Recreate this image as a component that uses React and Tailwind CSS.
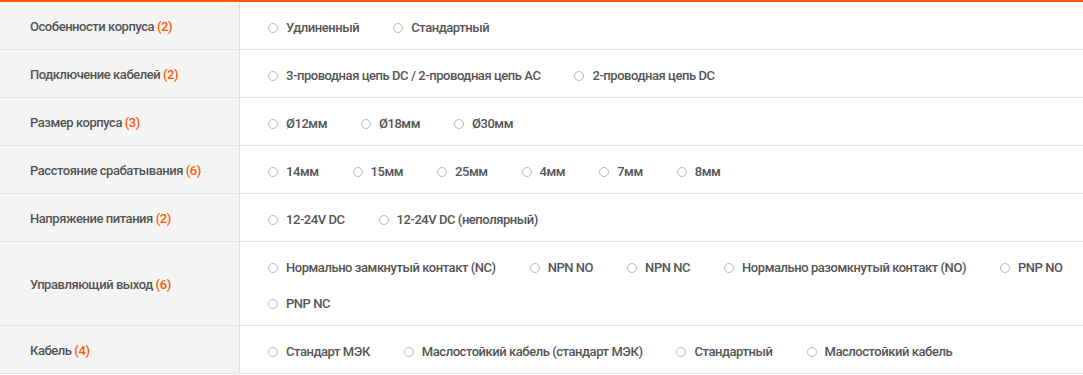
import React from "react";

const rows = [
  { label: "Особенности корпуса", count: 2, options: ["Удлиненный", "Стандартный"] },
  { label: "Подключение кабелей", count: 2, options: ["3-проводная цепь DC / 2-проводная цепь AC", "2-проводная цепь DC"] },
  { label: "Размер корпуса", count: 3, options: ["Ø12мм", "Ø18мм", "Ø30мм"] },
  { label: "Расстояние срабатывания", count: 6, options: ["14мм", "15мм", "25мм", "4мм", "7мм", "8мм"] },
  { label: "Напряжение питания", count: 2, options: ["12-24V DC", "12-24V DC (неполярный)"] },
  { label: "Управляющий выход", count: 6, options: ["Нормально замкнутый контакт (NC)", "NPN NO", "NPN NC", "Нормально разомкнутый контакт (NO)", "PNP NO", "PNP NC"] },
  { label: "Кабель", count: 4, options: ["Стандарт МЭК", "Маслостойкий кабель (стандарт МЭК)", "Стандартный", "Маслостойкий кабель"] },
];

export default function App() {
  return (
    <div className="w-[1083px] bg-white border-t-2 border-[#ff5a00] font-['Roboto',sans-serif] text-[13px] font-medium tracking-[-0.45px] text-[#555555]">
      {rows.map((r, i) => (
        <div key={i} className="flex border-b border-[#e2e2e2]">
          <div className="w-[240px] shrink-0 bg-[#f4f4f4] border-r border-[#dddddd] flex items-center pl-[30px] pt-[3px]">
            <span>
              {r.label} <span className="text-[#ff5a00]">({r.count})</span>
            </span>
          </div>
          <div className="flex-1 flex flex-wrap gap-x-[34px] gap-y-[16px] pl-[28px] pr-[10px] pt-[16px] pb-[11px]">
            {r.options.map((o, j) => (
              <label key={j} className="flex items-center h-[20px]">
                <span className="w-[10px] h-[10px] rounded-full border border-[#bbbbbb] bg-white mr-[8px] shrink-0" />
                <span>{o}</span>
              </label>
            ))}
          </div>
        </div>
      ))}
    </div>
  );
}
